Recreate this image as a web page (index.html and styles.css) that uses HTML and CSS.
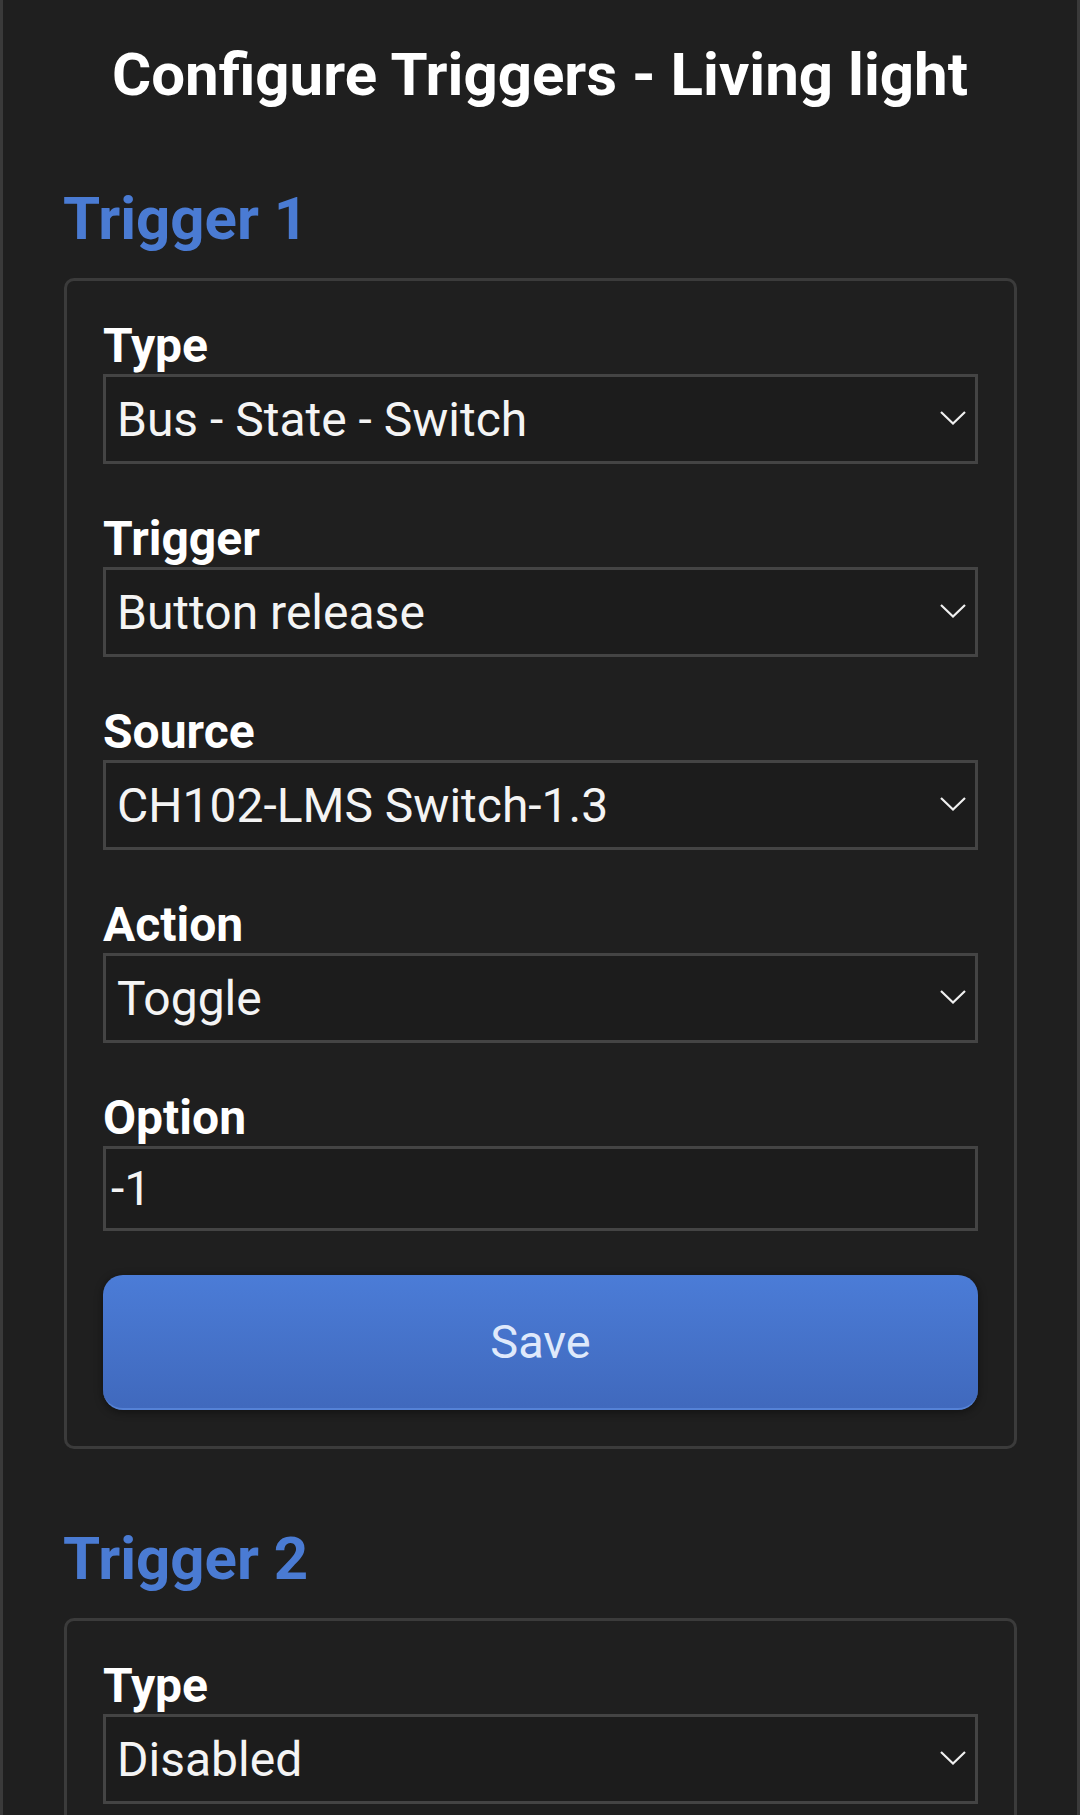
FILE: index.html
```html
<!DOCTYPE html>
<html lang="en">
<head>
    <meta charset="UTF-8">
    <meta name="viewport" content="width=device-width, initial-scale=1.0">
    <title>Configure Triggers - Living light</title>
    <link rel="stylesheet" href="styles.css">
</head>
<body>
    <div class="page">
        <h1>Configure Triggers - Living light</h1>

        <div class="trigger">
            <h2>Trigger 1</h2>
            <form class="trigger-box">
                <div class="form-group">
                    <label for="type-1">Type</label>
                    <div class="select-wrap">
                        <select id="type-1">
                            <option>Disabled</option>
                            <option selected>Bus - State - Switch</option>
                        </select>
                        <svg class="chevron" viewBox="0 0 26 14"><path d="M1 1 L13 12.5 L25 1"/></svg>
                    </div>
                </div>
                <div class="form-group">
                    <label for="trigger-1">Trigger</label>
                    <div class="select-wrap">
                        <select id="trigger-1">
                            <option>Button press</option>
                            <option selected>Button release</option>
                        </select>
                        <svg class="chevron" viewBox="0 0 26 14"><path d="M1 1 L13 12.5 L25 1"/></svg>
                    </div>
                </div>
                <div class="form-group">
                    <label for="source-1">Source</label>
                    <div class="select-wrap">
                        <select id="source-1">
                            <option selected>CH102-LMS Switch-1.3</option>
                        </select>
                        <svg class="chevron" viewBox="0 0 26 14"><path d="M1 1 L13 12.5 L25 1"/></svg>
                    </div>
                </div>
                <div class="form-group">
                    <label for="action-1">Action</label>
                    <div class="select-wrap">
                        <select id="action-1">
                            <option selected>Toggle</option>
                            <option>On</option>
                            <option>Off</option>
                        </select>
                        <svg class="chevron" viewBox="0 0 26 14"><path d="M1 1 L13 12.5 L25 1"/></svg>
                    </div>
                </div>
                <div class="form-group last">
                    <label for="option-1">Option</label>
                    <input type="text" id="option-1" value="-1">
                </div>
                <button type="button" class="save-btn">Save</button>
            </form>
        </div>

        <div class="trigger">
            <h2>Trigger 2</h2>
            <form class="trigger-box">
                <div class="form-group">
                    <label for="type-2">Type</label>
                    <div class="select-wrap">
                        <select id="type-2">
                            <option selected>Disabled</option>
                            <option>Bus - State - Switch</option>
                        </select>
                        <svg class="chevron" viewBox="0 0 26 14"><path d="M1 1 L13 12.5 L25 1"/></svg>
                    </div>
                </div>
            </form>
        </div>
    </div>
</body>
</html>
```

FILE: styles.css
```css
html, body {
    margin: 0;
    padding: 0;
    background-color: #1f1f1f;
}
body {
    font-family: Roboto, "Noto Sans", sans-serif;
    color: #fff;
}
.page {
    min-height: 1815px;
    box-sizing: border-box;
    padding: 40px 60px 0;
    border-left: 3px solid #3a3a3a;
    border-right: 3px solid #3a3a3a;
}
h1 {
    margin: 0 0 75px;
    text-align: center;
    font-size: 60px;
    line-height: 70px;
    font-weight: bold;
}
h2 {
    margin: 0 0 25px;
    color: #4a7bd3;
    font-size: 60px;
    line-height: 68px;
    font-weight: bold;
}
.trigger {
    margin-bottom: 76px;
}
.trigger-box {
    margin: 0 0 0 1px;
    border: 3px solid #3b3b3b;
    border-radius: 10px;
    padding: 36px 36px 36px;
}
.form-group {
    margin-bottom: 46px;
}
.form-group.last {
    margin-bottom: 44px;
}
.form-group:last-child {
    margin-bottom: 0;
}
label {
    display: block;
    font-size: 48px;
    line-height: 57px;
    font-weight: bold;
}
.select-wrap {
    position: relative;
}
select, input[type="text"] {
    display: block;
    width: 100%;
    box-sizing: border-box;
    margin: 0;
    background-color: #1c1c1c;
    color: #f4f4f4;
    border: 3px solid #444;
    border-radius: 0;
    font-family: Roboto, "Noto Sans", sans-serif;
    font-size: 48px;
    outline: none;
}
select {
    -webkit-appearance: none;
    appearance: none;
    height: 90px;
    padding: 0 60px 0 11px;
}
input[type="text"] {
    height: 85px;
    padding: 0 5px;
}
.chevron {
    position: absolute;
    right: 12px;
    top: 37px;
    width: 26px;
    height: 14px;
    fill: none;
    stroke: #f0f0f0;
    stroke-width: 2.2;
    pointer-events: none;
}
.save-btn {
    display: block;
    width: 100%;
    height: 135px;
    border: none;
    border-bottom: 2px solid #5582d6;
    border-radius: 20px;
    background: linear-gradient(#4b7cd7, #4069bd);
    box-shadow: 0 2px 8px rgba(0, 0, 0, 0.45);
    color: #dfe9fb;
    font-family: Roboto, "Noto Sans", sans-serif;
    font-size: 47px;
    cursor: pointer;
}
```
